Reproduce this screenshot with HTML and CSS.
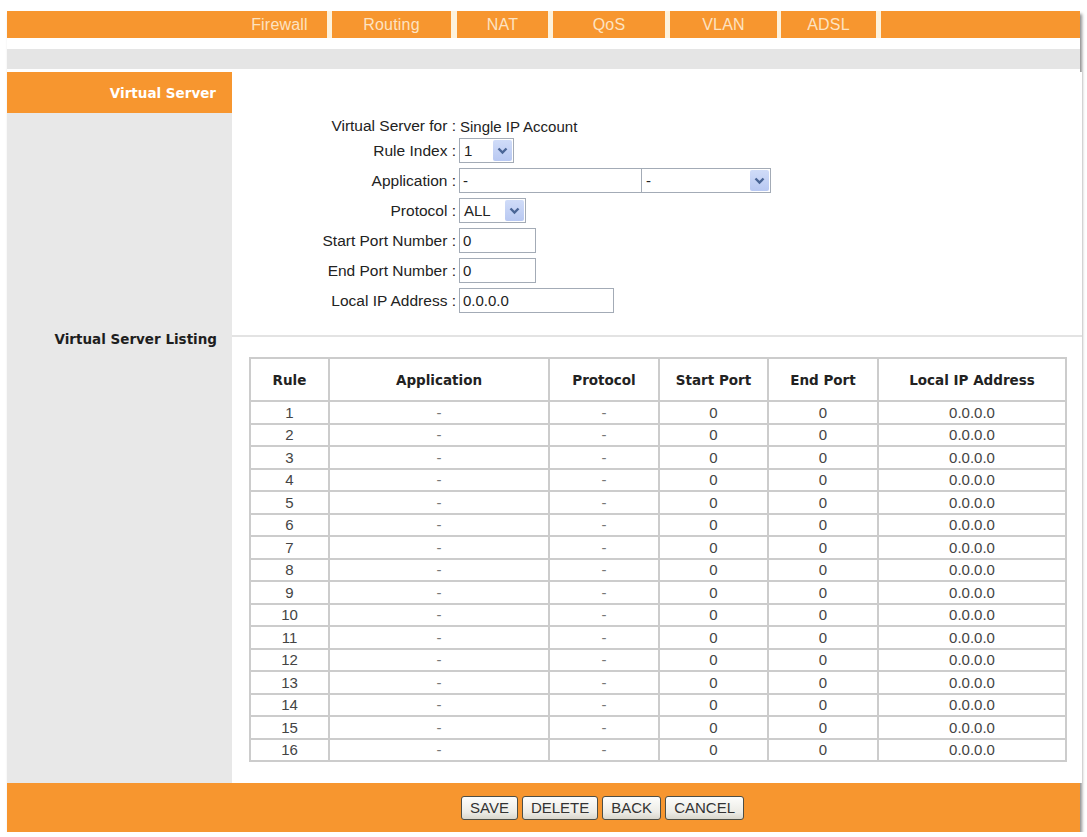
FILE: index.html
```html
<!DOCTYPE html>
<html lang="en">
<head>
<meta charset="utf-8">
<title>Virtual Server</title>
<link rel="stylesheet" href="styles.css">
</head>
<body>
<div class="page">
  <nav class="tabs">
    <span class="tab tab-blank"></span>
    <span class="tab tab-firewall">Firewall</span>
    <span class="tab tab-routing">Routing</span>
    <span class="tab tab-nat">NAT</span>
    <span class="tab tab-qos">QoS</span>
    <span class="tab tab-vlan">VLAN</span>
    <span class="tab tab-adsl">ADSL</span>
    <span class="tab tab-rest"></span>
  </nav>
  <div class="strip"></div>

  <div class="main">
    <aside class="side">
      <div class="side-head">Virtual Server</div>
    </aside>
    <section class="content form-area">
      <div class="form">
        <span class="label">Virtual Server for :</span>
        <span class="value">Single IP Account</span>

        <span class="label">Rule Index :</span>
        <div class="select sel-rule">
          <span class="val">1</span>
          <span class="arrow"><svg width="11" height="8" viewBox="0 0 11 8"><path d="M1.5 1.5 L5.5 5.5 L9.5 1.5" fill="none" stroke="#4a6596" stroke-width="2.4"/></svg></span>
        </div>

        <span class="label">Application :</span>
        <div class="pair">
          <input class="text in-app" type="text" value="-">
          <div class="select sel-app">
            <span class="val">-</span>
            <span class="arrow"><svg width="11" height="8" viewBox="0 0 11 8"><path d="M1.5 1.5 L5.5 5.5 L9.5 1.5" fill="none" stroke="#4a6596" stroke-width="2.4"/></svg></span>
          </div>
        </div>

        <span class="label">Protocol :</span>
        <div class="select sel-proto">
          <span class="val">ALL</span>
          <span class="arrow"><svg width="11" height="8" viewBox="0 0 11 8"><path d="M1.5 1.5 L5.5 5.5 L9.5 1.5" fill="none" stroke="#4a6596" stroke-width="2.4"/></svg></span>
        </div>

        <span class="label">Start Port Number :</span>
        <input class="text in-port" type="text" value="0">

        <span class="label">End Port Number :</span>
        <input class="text in-port" type="text" value="0">

        <span class="label">Local IP Address :</span>
        <input class="text in-ip" type="text" value="0.0.0.0">
      </div>
    </section>

    <aside class="side side-label">Virtual Server Listing</aside>
    <div class="content rule-cell"><div class="hr"></div></div>

    <aside class="side"></aside>
    <section class="content table-area">
      <table class="listing">
        <colgroup>
          <col class="c-rule"><col class="c-app"><col class="c-proto"><col class="c-start"><col class="c-end"><col class="c-ip">
        </colgroup>
        <thead>
          <tr><th>Rule</th><th>Application</th><th>Protocol</th><th>Start Port</th><th>End Port</th><th>Local IP Address</th></tr>
        </thead>
        <tbody>
          <tr><td>1</td><td class="dash">-</td><td class="dash">-</td><td>0</td><td>0</td><td>0.0.0.0</td></tr>
          <tr><td>2</td><td class="dash">-</td><td class="dash">-</td><td>0</td><td>0</td><td>0.0.0.0</td></tr>
          <tr><td>3</td><td class="dash">-</td><td class="dash">-</td><td>0</td><td>0</td><td>0.0.0.0</td></tr>
          <tr><td>4</td><td class="dash">-</td><td class="dash">-</td><td>0</td><td>0</td><td>0.0.0.0</td></tr>
          <tr><td>5</td><td class="dash">-</td><td class="dash">-</td><td>0</td><td>0</td><td>0.0.0.0</td></tr>
          <tr><td>6</td><td class="dash">-</td><td class="dash">-</td><td>0</td><td>0</td><td>0.0.0.0</td></tr>
          <tr><td>7</td><td class="dash">-</td><td class="dash">-</td><td>0</td><td>0</td><td>0.0.0.0</td></tr>
          <tr><td>8</td><td class="dash">-</td><td class="dash">-</td><td>0</td><td>0</td><td>0.0.0.0</td></tr>
          <tr><td>9</td><td class="dash">-</td><td class="dash">-</td><td>0</td><td>0</td><td>0.0.0.0</td></tr>
          <tr><td>10</td><td class="dash">-</td><td class="dash">-</td><td>0</td><td>0</td><td>0.0.0.0</td></tr>
          <tr><td>11</td><td class="dash">-</td><td class="dash">-</td><td>0</td><td>0</td><td>0.0.0.0</td></tr>
          <tr><td>12</td><td class="dash">-</td><td class="dash">-</td><td>0</td><td>0</td><td>0.0.0.0</td></tr>
          <tr><td>13</td><td class="dash">-</td><td class="dash">-</td><td>0</td><td>0</td><td>0.0.0.0</td></tr>
          <tr><td>14</td><td class="dash">-</td><td class="dash">-</td><td>0</td><td>0</td><td>0.0.0.0</td></tr>
          <tr><td>15</td><td class="dash">-</td><td class="dash">-</td><td>0</td><td>0</td><td>0.0.0.0</td></tr>
          <tr><td>16</td><td class="dash">-</td><td class="dash">-</td><td>0</td><td>0</td><td>0.0.0.0</td></tr>
        </tbody>
      </table>
    </section>
  </div>

  <footer class="actions">
    <button type="button" class="btn">SAVE</button>
    <button type="button" class="btn">DELETE</button>
    <button type="button" class="btn">BACK</button>
    <button type="button" class="btn">CANCEL</button>
  </footer>
</div>
</body>
</html>
```

FILE: styles.css
```css
/* Router admin page: Virtual Server */
html, body {
  margin: 0;
  padding: 0;
  background: #ffffff;
}

body {
  padding-top: 11px;
  font-family: "Liberation Sans", Arial, sans-serif;
  font-size: 15px;
  color: #222;
}

.page {
  margin-left: 7px;
  width: 1073px;
  background: #ffffff;
  box-shadow: 2px 3px 3px rgba(0, 0, 0, 0.45);
}

/* ---- top tab bar ---- */
.tabs {
  display: flex;
  height: 27px;
  background: #fdf2dc;
}

.tab {
  display: flex;
  align-items: center;
  justify-content: center;
  background: #f7962f;
  color: #fde3c2;
  font-size: 16px;
  letter-spacing: 0.2px;
}

.tab-blank    { width: 225px; }
.tab-firewall { width: 95px; }
.tab-routing  { width: 119px; margin-left: 5px; }
.tab-nat      { width: 91px;  margin-left: 6px; }
.tab-qos      { width: 112px; margin-left: 5px; }
.tab-vlan     { width: 107px; margin-left: 5px; }
.tab-adsl     { width: 95px;  margin-left: 4px; }
.tab-rest     { flex: 1;      margin-left: 5px; }

.strip {
  height: 20px;
  margin-top: 11px;
  margin-bottom: 3px;
  background: #e5e5e5;
}

/* ---- sidebar + content grid ---- */
.main {
  display: grid;
  grid-template-columns: 225px 1fr;
  grid-template-rows: 256px 22px 1fr;
  height: 711px;
}

.side {
  background: #e8e8e8;
}

.side-head {
  height: 41px;
  background: #f7962f;
  color: #ffffff;
  font-family: "DejaVu Sans", Verdana, sans-serif;
  font-weight: bold;
  font-size: 13.5px;
  display: flex;
  align-items: center;
  justify-content: flex-end;
  padding-right: 16px;
}

.side-label {
  display: flex;
  align-items: center;
  justify-content: flex-end;
  padding-right: 15px;
  font-family: "DejaVu Sans", Verdana, sans-serif;
  font-weight: bold;
  font-size: 13.5px;
  color: #1e1e1e;
}

.content {
  background: #ffffff;
}

/* ---- form ---- */
.form-area {
  padding-top: 47px;
}

.form {
  display: grid;
  grid-template-columns: 224px auto;
  grid-template-rows: 14px repeat(6, 25px);
  column-gap: 3px;
  row-gap: 5px;
  align-items: center;
  justify-items: start;
}

.label {
  justify-self: end;
  white-space: nowrap;
  font-size: 15.5px;
  color: #222;
}

.value {
  padding-left: 1px;
  white-space: nowrap;
  color: #222;
}

.pair {
  display: flex;
}

.text {
  box-sizing: border-box;
  height: 25px;
  margin: 0;
  padding: 0 3px;
  border: 1px solid #a3abb6;
  background: #ffffff;
  font-family: "Liberation Sans", Arial, sans-serif;
  font-size: 15px;
  color: #222;
  outline: none;
}

.in-app  { width: 183px; }
.in-port { width: 77px; }
.in-ip   { width: 155px; }

.select {
  box-sizing: border-box;
  display: flex;
  align-items: stretch;
  height: 25px;
  border: 1px solid #a3abb6;
  background: #ffffff;
}

.select .val {
  flex: 1;
  display: flex;
  align-items: center;
  padding-left: 4px;
  color: #222;
}

.select .arrow {
  width: 19px;
  margin: 1px;
  border-radius: 2px;
  background: linear-gradient(#d0dcf8, #b8c8f2);
  display: flex;
  align-items: center;
  justify-content: center;
}

.sel-rule  { width: 55px; }
.sel-app   { width: 129px; border-left: none; }
.sel-proto { width: 67px; }

/* ---- divider beside "Virtual Server Listing" ---- */
.rule-cell {
  padding-top: 7px;
}

.hr {
  height: 2px;
  background: #e3e3e3;
}

/* ---- listing table ---- */
.table-area {
  padding: 7px 15px 0 17px;
}

.listing {
  width: 816px;
  table-layout: fixed;
  border-collapse: collapse;
  border: 2px solid #c8c8c8;
}

.c-rule  { width: 79px; }
.c-app   { width: 220px; }
.c-proto { width: 110px; }
.c-start { width: 109px; }
.c-end   { width: 110px; }
.c-ip    { width: 188px; }

.listing th,
.listing td {
  border: 2px solid #cccccc;
  text-align: center;
  padding: 0;
}

.listing thead tr {
  height: 43px;
}

.listing th {
  font-family: "DejaVu Sans", Verdana, sans-serif;
  font-weight: bold;
  font-size: 13.5px;
  color: #222;
}

.listing tbody tr {
  height: 22.5px;
}

.listing td {
  font-size: 15px;
  line-height: 17px;
  color: #444;
}

.listing td.dash {
  color: #777;
}

/* ---- bottom action bar ---- */
.actions {
  height: 49px;
  background: #f7962f;
  display: flex;
  align-items: center;
  gap: 4px;
  padding-left: 454px;
}

.btn {
  box-sizing: border-box;
  height: 24px;
  margin: 0;
  padding: 0 8px;
  border: 1px solid #4e4e44;
  border-radius: 3px;
  background: linear-gradient(#fdfdfb, #ecebe5 70%, #d9d6cc);
  font-family: "Liberation Sans", Arial, sans-serif;
  font-size: 15px;
  color: #333;
}
```
